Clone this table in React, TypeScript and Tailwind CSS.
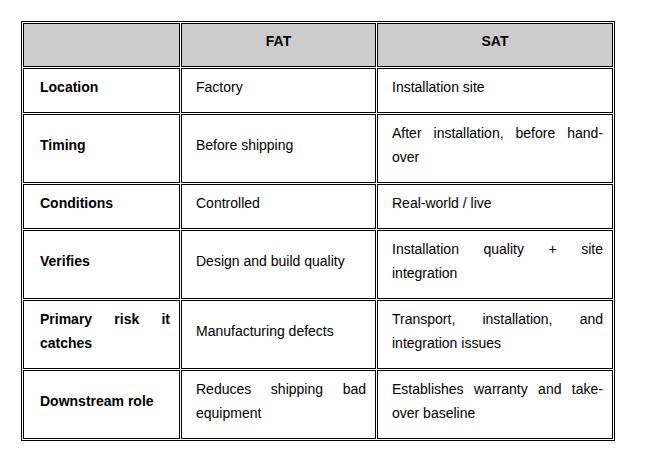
const rows = [
  {
    label: "Location",
    fat: "Factory",
    sat: "Installation site",
    h: "h-[45px]",
  },
  {
    label: "Timing",
    fat: "Before shipping",
    sat: "After installation, before hand-over",
    h: "h-[69px]",
  },
  {
    label: "Conditions",
    fat: "Controlled",
    sat: "Real-world / live",
    h: "h-[45px]",
  },
  {
    label: "Verifies",
    fat: "Design and build quality",
    sat: "Installation quality + site integration",
    h: "h-[69px]",
  },
  {
    label: "Primary risk it catches",
    fat: "Manufacturing defects",
    sat: "Transport, installation, and integration issues",
    h: "h-[69px]",
  },
  {
    label: "Downstream role",
    fat: "Reduces shipping bad equipment",
    sat: "Establishes warranty and take-over baseline",
    h: "h-[69px]",
  },
];

export default function App() {
  return (
    <div
      className="min-h-screen bg-white pl-[21px] pt-[21px] text-[14px] text-black"
      style={{ fontFamily: '"Liberation Sans", Arial, sans-serif' }}
    >
      <table className="w-[594px] table-fixed border-separate border-spacing-[1px] border border-black">
        <colgroup>
          <col className="w-[157px]" />
          <col className="w-[195px]" />
          <col className="w-[236px]" />
        </colgroup>
        <thead>
          <tr className="h-[44px]">
            <th className="border border-black bg-[#cccccc] p-0 align-middle"></th>
            <th className="border border-black bg-[#cccccc] px-2 py-0 align-middle">
              <p className="mb-2 text-center font-bold leading-6">FAT</p>
            </th>
            <th className="border border-black bg-[#cccccc] px-2 py-0 align-middle">
              <p className="mb-2 text-center font-bold leading-6">SAT</p>
            </th>
          </tr>
        </thead>
        <tbody>
          {rows.map((row) => (
            <tr key={row.label} className={row.h}>
              <td className="border border-black py-0 pl-[16px] pr-[9px] align-middle">
                <p className="mb-2 text-justify font-bold leading-6">
                  {row.label}
                </p>
              </td>
              <td className="border border-black py-0 pl-[14px] pr-[9px] align-middle">
                <p className="mb-2 text-justify leading-6">{row.fat}</p>
              </td>
              <td className="border border-black py-0 pl-[14px] pr-[9px] align-middle">
                <p className="mb-2 text-justify leading-6">{row.sat}</p>
              </td>
            </tr>
          ))}
        </tbody>
      </table>
    </div>
  );
}
